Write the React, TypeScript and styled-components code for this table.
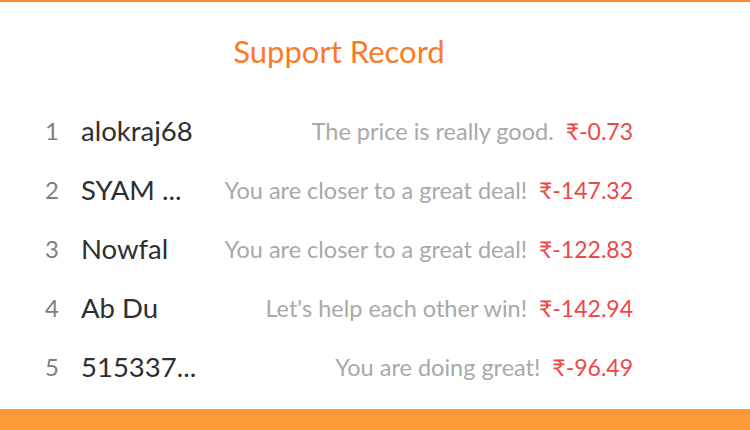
import React from "react";
import styled, { createGlobalStyle } from "styled-components";

const GlobalStyle = createGlobalStyle`
  html, body {
    margin: 0;
    padding: 0;
    background: #ffffff;
    font-family: "Lato", "DejaVu Sans", sans-serif;
  }
`;

const Page = styled.div`
  width: 750px;
  height: 430px;
  display: flex;
  flex-direction: column;
  border-top: 2px solid #fd8a2c;
  box-sizing: border-box;
  background: #fff;
`;

const Content = styled.div`
  flex: 1;
  display: flex;
  flex-direction: column;
  width: 588px;
  margin-left: 45px;
`;

const Title = styled.h2`
  margin: 0;
  padding-top: 31px;
  height: 68px;
  box-sizing: border-box;
  text-align: center;
  font-size: 31px;
  font-weight: 400;
  line-height: 36px;
  color: #fb7a29;
`;

const List = styled.div`
  display: flex;
  flex-direction: column;
  padding-top: 31px;
`;

const Row = styled.div`
  display: flex;
  align-items: center;
  height: 59px;
`;

const Rank = styled.span`
  width: 36px;
  font-size: 24px;
  color: #7f7f7f;
`;

const Name = styled.span`
  font-size: 27.5px;
  color: #2f2f2f;
`;

const Message = styled.span`
  margin-left: auto;
  font-size: 23.5px;
  color: #a9a9a9;
`;

const Amount = styled.span`
  margin-left: 12px;
  font-size: 23px;
  color: #ef4747;
`;

const Footer = styled.div`
  height: 21px;
  background: #fd9a38;
`;

const records = [
  { name: "alokraj68", message: "The price is really good.", amount: "-0.73" },
  { name: "SYAM ...", message: "You are closer to a great deal!", amount: "-147.32" },
  { name: "Nowfal", message: "You are closer to a great deal!", amount: "-122.83" },
  { name: "Ab Du", message: "Let's help each other win!", amount: "-142.94" },
  { name: "515337...", message: "You are doing great!", amount: "-96.49" },
];

export default function App() {
  return (
    <>
      <GlobalStyle />
      <Page>
        <Content>
          <Title>Support Record</Title>
          <List>
            {records.map((r, i) => (
              <Row key={i}>
                <Rank>{i + 1}</Rank>
                <Name>{r.name}</Name>
                <Message>{r.message}</Message>
                <Amount>₹{r.amount}</Amount>
              </Row>
            ))}
          </List>
        </Content>
        <Footer />
      </Page>
    </>
  );
}
